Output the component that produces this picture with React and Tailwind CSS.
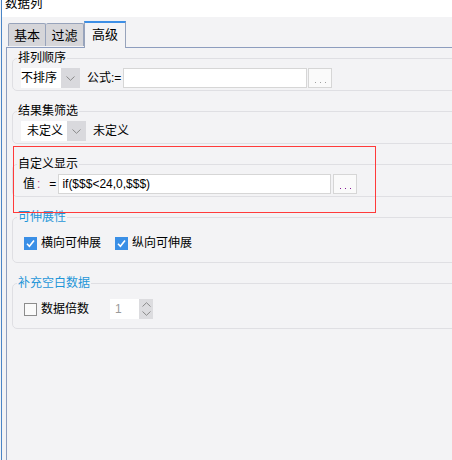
import React from 'react';

// Fenêtre "数据列" – onglet 高级
const font = { fontFamily: '"Liberation Sans", "Noto Sans CJK SC", sans-serif' };

function Chevron({ up = false }) {
  return (
    <svg width="9" height="5" viewBox="0 0 9 5" className="block">
      <path d={up ? 'M0.5 4.5 L4.5 0.7 L8.5 4.5' : 'M0.5 0.5 L4.5 4.3 L8.5 0.5'} fill="none" stroke="#8a8a8a" strokeWidth="1" />
    </svg>
  );
}

function Select({ label, white, pad }) {
  return (
    <div className="flex h-[20px]">
      <div className={`${white} ${pad} bg-white h-full flex items-center text-[12px] text-black`}>{label}</div>
      <div className="w-[19px] h-full bg-[#d9d9dd] flex items-center justify-center">
        <Chevron />
      </div>
    </div>
  );
}

function Group({ title, blue = false, children, className = '' }) {
  return (
    <fieldset className={`border border-[#dfdfe3] rounded-[5px] w-[470px] pl-[8px] ${className}`}>
      <legend className={`-ml-[4px] px-px text-[12px] leading-[14px] ${blue ? 'text-[#1f96d8]' : 'text-black'}`}>{title}</legend>
      {children}
    </fieldset>
  );
}

function Dots({ color }) {
  return (
    <div className="w-[24px] h-[20px] bg-[#fafafa] border border-[#d6d6d6] flex items-end justify-center pb-[4px] gap-[4px]">
      <span className={`w-px h-px ${color}`} />
      <span className={`w-px h-px ${color}`} />
      <span className={`w-px h-px ${color}`} />
    </div>
  );
}

function Check({ checked }) {
  if (!checked) return <div className="w-[13px] h-[13px] border border-[#8c8c8c] bg-[#fafafa]" />;
  return (
    <div className="w-[13px] h-[13px] bg-[#3a8fe6] flex items-center justify-center">
      <svg width="11" height="11" viewBox="0 0 11 11">
        <path d="M2 5.8 L4.4 8.2 L9 2.6" fill="none" stroke="#fff" strokeWidth="1.6" />
      </svg>
    </div>
  );
}

export default function App() {
  return (
    <div className="w-[452px] h-[460px] overflow-hidden flex bg-[#f3f3f5] text-black relative" style={font}>
      {/* bord gauche */}
      <div className="w-px bg-[#f3f3f5]" />
      <div className="w-px bg-[#4a85c6]" />
      <div className="flex-1 flex flex-col min-w-0">
        {/* titre */}
        <div className="h-[17px] bg-white overflow-hidden">
          <div className="-mt-[5px] ml-[3px] text-[12.5px] leading-[18px]">数据列</div>
        </div>
        <div className="flex flex-1 min-h-0">
          <div className="w-[4px]" />
          <div className="flex-1 flex flex-col min-w-0">
            {/* onglets */}
            <div className="h-[30px] flex items-end relative z-10">
              <div className="w-[2px]" />
              <div className="w-[38px] h-[23px] border border-b-0 border-[#97a3bb] bg-[#d5d5d9] rounded-t-[2px] flex items-center justify-center text-[13px] leading-none mb-px">基本</div>
              <div className="w-[38px] h-[23px] border border-b-0 border-l-0 border-[#97a3bb] bg-[#d5d5d9] rounded-t-[2px] flex items-center justify-center text-[13px] leading-none mb-px">过滤</div>
              <div className="w-[42px] h-[27px] border-x border-[#97a3bb] border-t-2 border-t-[#3d8fe6] bg-[#f3f3f5] flex items-start pt-[5px] justify-center text-[13px] leading-none -mb-px">高级</div>
            </div>
            {/* panneau */}
            <div className="flex-1 border-l border-t border-[#8d9dbe] pl-[5px] pt-[3px] flex flex-col min-h-0">
              <Group title="排列顺序">
                <div className="flex items-center h-[20px] mt-[3px] mb-[2px]">
                  <Select label="不排序" white="w-[40px]" pad="pl-0" />
                  <span className="ml-[7px] w-[36px] text-[12px] leading-none">公式:=</span>
                  <div className="w-[184px] h-[20px] bg-white border border-[#d6d6d6]" />
                  <div className="ml-[1px]"><Dots color="bg-[#a0a0a0]" /></div>
                </div>
              </Group>

              <Group title="结果集筛选" className="mt-[13px]">
                <div className="flex items-center h-[20px] mt-[3px] mb-[2px]">
                  <Select label="未定义" white="w-[46px]" pad="pl-[6px]" />
                  <span className="ml-[7px] text-[12px] leading-none">未定义</span>
                </div>
              </Group>

              <Group title="自定义显示" className="mt-[13px]">
                <div className="flex items-center h-[20px] mt-[3px] mb-[2px]">
                  <span className="ml-[2px] text-[12px] leading-none">值</span>
                  <span className="ml-[2px] text-[12px] leading-none text-[#c0508a]">:</span>
                  <span className="ml-[9px] text-[12px] leading-none">=</span>
                  <div className="ml-[2px] w-[273px] h-[20px] bg-white border border-[#d6d6d6] flex items-center pl-[3px] text-[12px] leading-none">if($$$&lt;24,0,$$$)</div>
                  <div className="ml-[2px]"><Dots color="bg-[#8a1a9a]" /></div>
                </div>
              </Group>

              <Group title="可伸展性" blue className="mt-[13px]">
                <div className="flex items-center h-[14px] mt-[12px] mb-[12px] pl-[3px]">
                  <Check checked />
                  <span className="ml-[4px] text-[12px] leading-none">横向可伸展</span>
                  <div className="ml-[14px]"><Check checked /></div>
                  <span className="ml-[4px] text-[12px] leading-none">纵向可伸展</span>
                </div>
              </Group>

              <Group title="补充空白数据" blue className="mt-[13px]">
                <div className="flex items-center h-[20px] mt-[9px] mb-[9px] pl-[3px]">
                  <Check />
                  <span className="ml-[4px] text-[12px] leading-none">数据倍数</span>
                  <div className="ml-[21px] flex h-[20px]">
                    <div className="w-[29px] h-full bg-white flex items-center pl-[5px] text-[12px] leading-none text-[#9a9a9a]">1</div>
                    <div className="w-[14px] h-full bg-[#dcdcdf] flex flex-col items-center justify-between py-[3px]">
                      <Chevron up />
                      <Chevron />
                    </div>
                  </div>
                </div>
              </Group>
            </div>
          </div>
        </div>
      </div>

      {/* cadre rouge d'annotation */}
      <div className="absolute left-[13px] top-[146px] w-[363px] h-[67px] border border-[#ff3a3a] pointer-events-none" />
    </div>
  );
}
